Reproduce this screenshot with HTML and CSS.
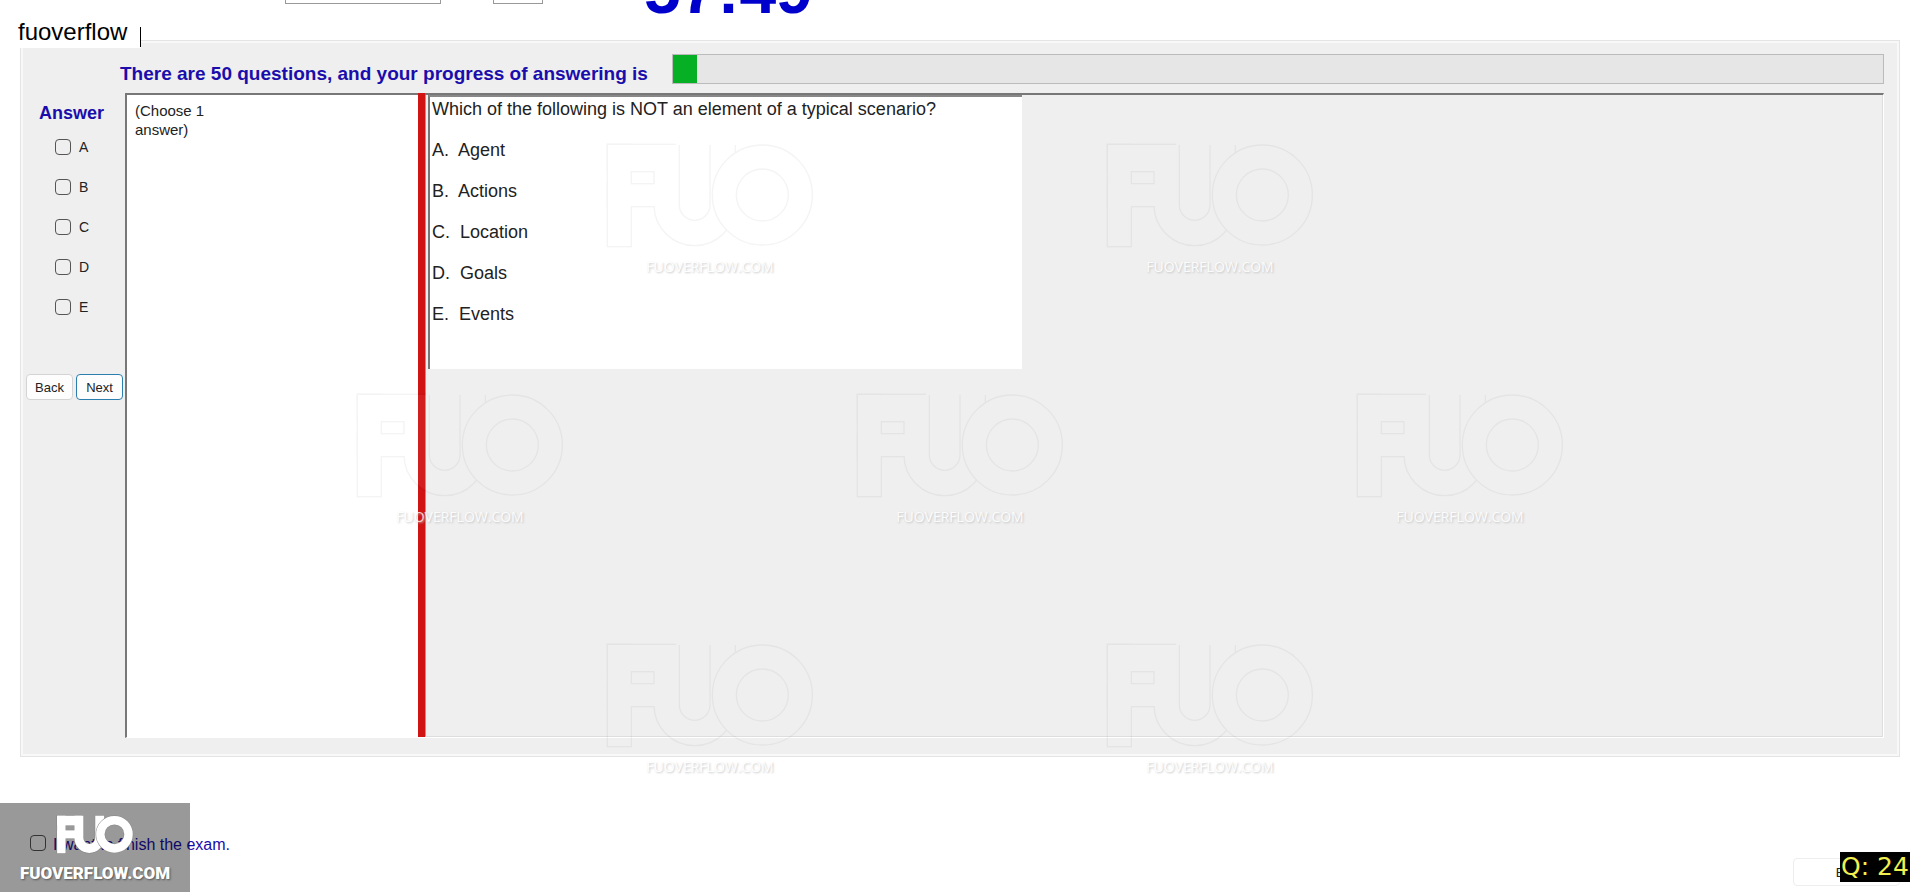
FILE: index.html
```html
<!DOCTYPE html>
<html lang="en">

<head>
  <meta charset="UTF-8" />
  <meta name="viewport" content="width=device-width, initial-scale=1.0" />
  <title>Exam</title>
  <link rel="stylesheet" href="styles.css">
</head>

<body>
  <!-- shared logo mark -->
  <svg class="defs" aria-hidden="true">
    <defs>
      <g id="mark-left">
        <rect x="0" y="0" width="68" height="303" />
        <rect x="0" y="0" width="200" height="78" />
        <rect x="0" y="118" width="170" height="65" />
        <path d="M176 0V180a84 84 0 0 0 168 0V0" />
      </g>
      <circle id="mark-ring" cx="463" cy="150" r="114" />
      <g id="mark">
        <use href="#mark-left" class="mark-edge" />
        <use href="#mark-left" class="mark-body" />
        <use href="#mark-ring" class="ring-edge" />
        <use href="#mark-ring" class="ring-body" />
      </g>
    </defs>
  </svg>

  <header class="top-bar">
    <select class="font-select" aria-label="Font"><option></option></select>
    <input class="size-input" type="text" aria-label="Size">
    <div class="timer">57:49</div>
  </header>

  <div class="login-name">fuoverflow</div>

  <main class="exam">
    <div class="progress-row">
      <label for="progress">There are 50 questions, and your progress of answering is</label>
      <progress id="progress" value="1" max="50"></progress>
    </div>

    <div class="exam-body">
      <aside class="answers">
        <h2>Answer</h2>
        <label><input type="checkbox"> A</label>
        <label><input type="checkbox"> B</label>
        <label><input type="checkbox"> C</label>
        <label><input type="checkbox"> D</label>
        <label><input type="checkbox"> E</label>
        <div class="nav-buttons">
          <button type="button">Back</button>
          <button type="button" class="next">Next</button>
        </div>
      </aside>

      <div class="panel">
        <div class="hint">(Choose 1<br>answer)</div>
        <div class="splitter"></div>
        <div class="question-area">
          <div class="question">
            <p>Which of the following is NOT an element of a typical scenario?</p>
            <p>A.&nbsp; Agent</p>
            <p>B.&nbsp; Actions</p>
            <p>C.&nbsp; Location</p>
            <p>D.&nbsp; Goals</p>
            <p>E.&nbsp; Events</p>
          </div>
        </div>
      </div>
    </div>
  </main>

  <footer class="bottom-bar">
    <label class="finish"><input type="checkbox"> I want to finish the exam.</label>
    <button type="button" class="exit">Exit</button>
  </footer>

  <!-- watermarks -->
  <div class="watermarks">
    <div class="mark-row">
      <div class="watermark"><svg viewBox="-6 -6 624 315"><use href="#mark" /></svg><span>FUOVERFLOW.COM</span></div>
      <div class="watermark"><svg viewBox="-6 -6 624 315"><use href="#mark" /></svg><span>FUOVERFLOW.COM</span></div>
    </div>
    <div class="mark-row">
      <div class="watermark"><svg viewBox="-6 -6 624 315"><use href="#mark" /></svg><span>FUOVERFLOW.COM</span></div>
      <div class="watermark"><svg viewBox="-6 -6 624 315"><use href="#mark" /></svg><span>FUOVERFLOW.COM</span></div>
      <div class="watermark"><svg viewBox="-6 -6 624 315"><use href="#mark" /></svg><span>FUOVERFLOW.COM</span></div>
    </div>
    <div class="mark-row">
      <div class="watermark"><svg viewBox="-6 -6 624 315"><use href="#mark" /></svg><span>FUOVERFLOW.COM</span></div>
      <div class="watermark"><svg viewBox="-6 -6 624 315"><use href="#mark" /></svg><span>FUOVERFLOW.COM</span></div>
    </div>
  </div>

  <div class="brand">
    <svg viewBox="-6 -6 624 315"><use href="#mark" /></svg>
    <span>FUOVERFLOW.COM</span>
  </div>

  <div class="counter">Q: 24</div>
</body>

</html>
```

FILE: styles.css
```css
* {
  box-sizing: border-box;
}

body {
  position: relative;
  display: flex;
  flex-direction: column;
  min-height: 100vh;
  margin: 0;
  overflow: hidden;
  background-color: #fff;
  color: #222;
  font-family: "Liberation Sans", Arial, sans-serif;
}

button,
input,
select {
  font-family: inherit;
}

.defs {
  position: absolute;
  width: 0;
  height: 0;
}

/* top bar, cut off by the window edge */
.top-bar {
  display: flex;
  align-items: flex-end;
  height: 40px;
  padding: 0 0 13px 285px;
  overflow: hidden;
}

.font-select,
.size-input {
  flex: none;
  height: 24px;
  margin-bottom: 23px;
  border: 1px solid #999;
  border-radius: 0;
  background-color: #fff;
}

.font-select {
  width: 156px;
  margin-right: 52px;
}

.size-input {
  width: 50px;
  margin-right: 101px;
}

.timer {
  flex: none;
  color: #0000cc;
  font-size: 66px;
  font-weight: bold;
  line-height: 74px;
}

.login-name {
  position: absolute;
  top: 16px;
  left: 8px;
  padding: 0 14px 0 10px;
  background: linear-gradient(#000, #000) right 11px / 1px 20px no-repeat, #fff;
  color: #000;
  font-size: 24px;
  line-height: 32px;
}

/* exam group box */
.exam {
  margin: 0 20px;
  padding: 13px 15px 18px 5px;
  border: 1px solid #e4e4e4;
  box-shadow: inset 0 0 0 2px #f8f8f8;
  background-color: #efefef;
}

.progress-row {
  display: flex;
  align-items: center;
  gap: 24px;
  padding-left: 94px;
}

.progress-row label {
  padding-top: 10px;
  color: #1a0dab;
  font-size: 19px;
  font-weight: bold;
  line-height: 20px;
  white-space: nowrap;
}

progress {
  flex: 1;
  height: 30px;
  border: 1px solid #bbb;
  background-color: #e6e6e6;
  appearance: none;
}

progress::-webkit-progress-bar {
  background-color: #e6e6e6;
}

progress::-webkit-progress-value {
  background-color: #06b025;
}

.exam-body {
  display: flex;
  margin-top: 9px;
}

.answers {
  display: flex;
  flex: none;
  flex-direction: column;
  width: 99px;
}

.answers h2 {
  margin: 10px 0 14px 13px;
  color: #1a0dab;
  font-size: 18px;
  line-height: 20px;
}

.answers label {
  display: flex;
  align-items: flex-start;
  gap: 8px;
  height: 40px;
  padding: 2px 0 0 29px;
  font-size: 14px;
  line-height: 16px;
}

input[type="checkbox"] {
  flex: none;
  width: 16px;
  height: 16px;
  margin: 0;
  border: 1px solid #555;
  border-radius: 4px;
  background-color: transparent;
  appearance: none;
}

.nav-buttons {
  display: flex;
  gap: 3px;
  margin-top: 37px;
}

button {
  border: 1px solid #d4d4d4;
  border-radius: 4px;
  background-color: #fdfdfd;
  color: #222;
  font-size: 13px;
}

.nav-buttons button {
  flex: none;
  width: 47px;
  height: 26px;
  padding: 0;
}

.nav-buttons .next {
  border: 1px solid #2a7fae;
}

.panel {
  display: flex;
  flex: 1;
  min-height: 645px;
  border: 1px solid #fff;
  border-top: 2px solid #777;
  border-left: 2px solid #777;
}

.hint {
  flex: none;
  width: 291px;
  padding: 6px 8px;
  background-color: #fff;
  font-size: 15px;
  line-height: 19px;
}

.splitter {
  flex: none;
  width: 7px;
  margin-top: -2px;
  background-color: #d01414;
}

.question-area {
  flex: 1;
  border-right: 1px solid #ddd;
  border-bottom: 1px solid #ddd;
  border-left: 1px solid #999;
}

.question {
  width: 594px;
  min-height: 274px;
  margin-left: 2px;
  padding: 2px 0 0 2px;
  border-top: 2px solid #888;
  border-left: 2px solid #777;
  background-color: #fff;
  font-size: 18px;
  line-height: 21px;
}

.question p {
  margin: 0 0 20px;
}

.question p:last-child {
  margin: 0;
}

/* footer */
.bottom-bar {
  display: flex;
  flex: 1;
  align-items: flex-end;
  justify-content: space-between;
  padding: 0 20px 6px 30px;
}

.finish {
  display: flex;
  gap: 7px;
  margin-bottom: 31px;
  color: #1a0dab;
  font-size: 16px;
  line-height: 20px;
}

.exit {
  width: 107px;
  height: 28px;
  border-color: #eee;
  background-color: #fff;
}

/* logo: a wider dark pass under a white one leaves a thin outline */
#mark-left rect {
  fill: var(--ink);
  stroke: var(--ink);
  stroke-width: var(--spread);
}

#mark-left path {
  fill: none;
  stroke: var(--ink);
  stroke-width: calc(72px + var(--spread));
}

#mark-ring {
  fill: none;
  stroke: var(--ink);
  stroke-width: calc(68px + var(--spread));
}

.mark-edge,
.ring-edge {
  --ink: var(--edge);
  --spread: 8px;
}

.mark-body,
.ring-body {
  --ink: #fff;
  --spread: 0px;
}

.watermarks {
  position: absolute;
  top: 143px;
  left: 0;
  width: 100%;
  pointer-events: none;
}

.mark-row {
  display: flex;
  justify-content: center;
  gap: 292px;
  height: 250px;
}

.watermark {
  display: flex;
  flex: none;
  flex-direction: column;
  align-items: center;
  gap: 10px;
  width: 208px;
}

.watermark svg {
  --edge: #000;
  width: 208px;
  height: 105px;
  opacity: 0.04;
}

.watermark span {
  color: #fff;
  font-family: "Open Sans", sans-serif;
  font-size: 14px;
  font-weight: 500;
  line-height: 18px;
  opacity: 0.8;
  text-shadow: 1px 1px 2px #bbb;
}

.brand {
  position: absolute;
  bottom: 0;
  left: 0;
  display: flex;
  flex-direction: column;
  align-items: center;
  width: 190px;
  height: 89px;
  padding-top: 12px;
  background-color: rgba(0, 0, 0, 0.4);
}

.brand svg {
  --edge: #888;
  width: 82px;
  height: 41px;
}

.brand span {
  color: #fff;
  font-family: Roboto, "Liberation Sans", sans-serif;
  font-size: 17px;
  font-weight: 900;
  line-height: 38px;
  text-shadow: 1px 1px 2px #555;
}

.counter {
  position: absolute;
  right: 10px;
  bottom: 10px;
  width: 70px;
  background-color: #000;
  color: #f0f050;
  font-family: "DejaVu Sans", Verdana, sans-serif;
  font-size: 25px;
  line-height: 30px;
  text-align: center;
  white-space: nowrap;
}
```
